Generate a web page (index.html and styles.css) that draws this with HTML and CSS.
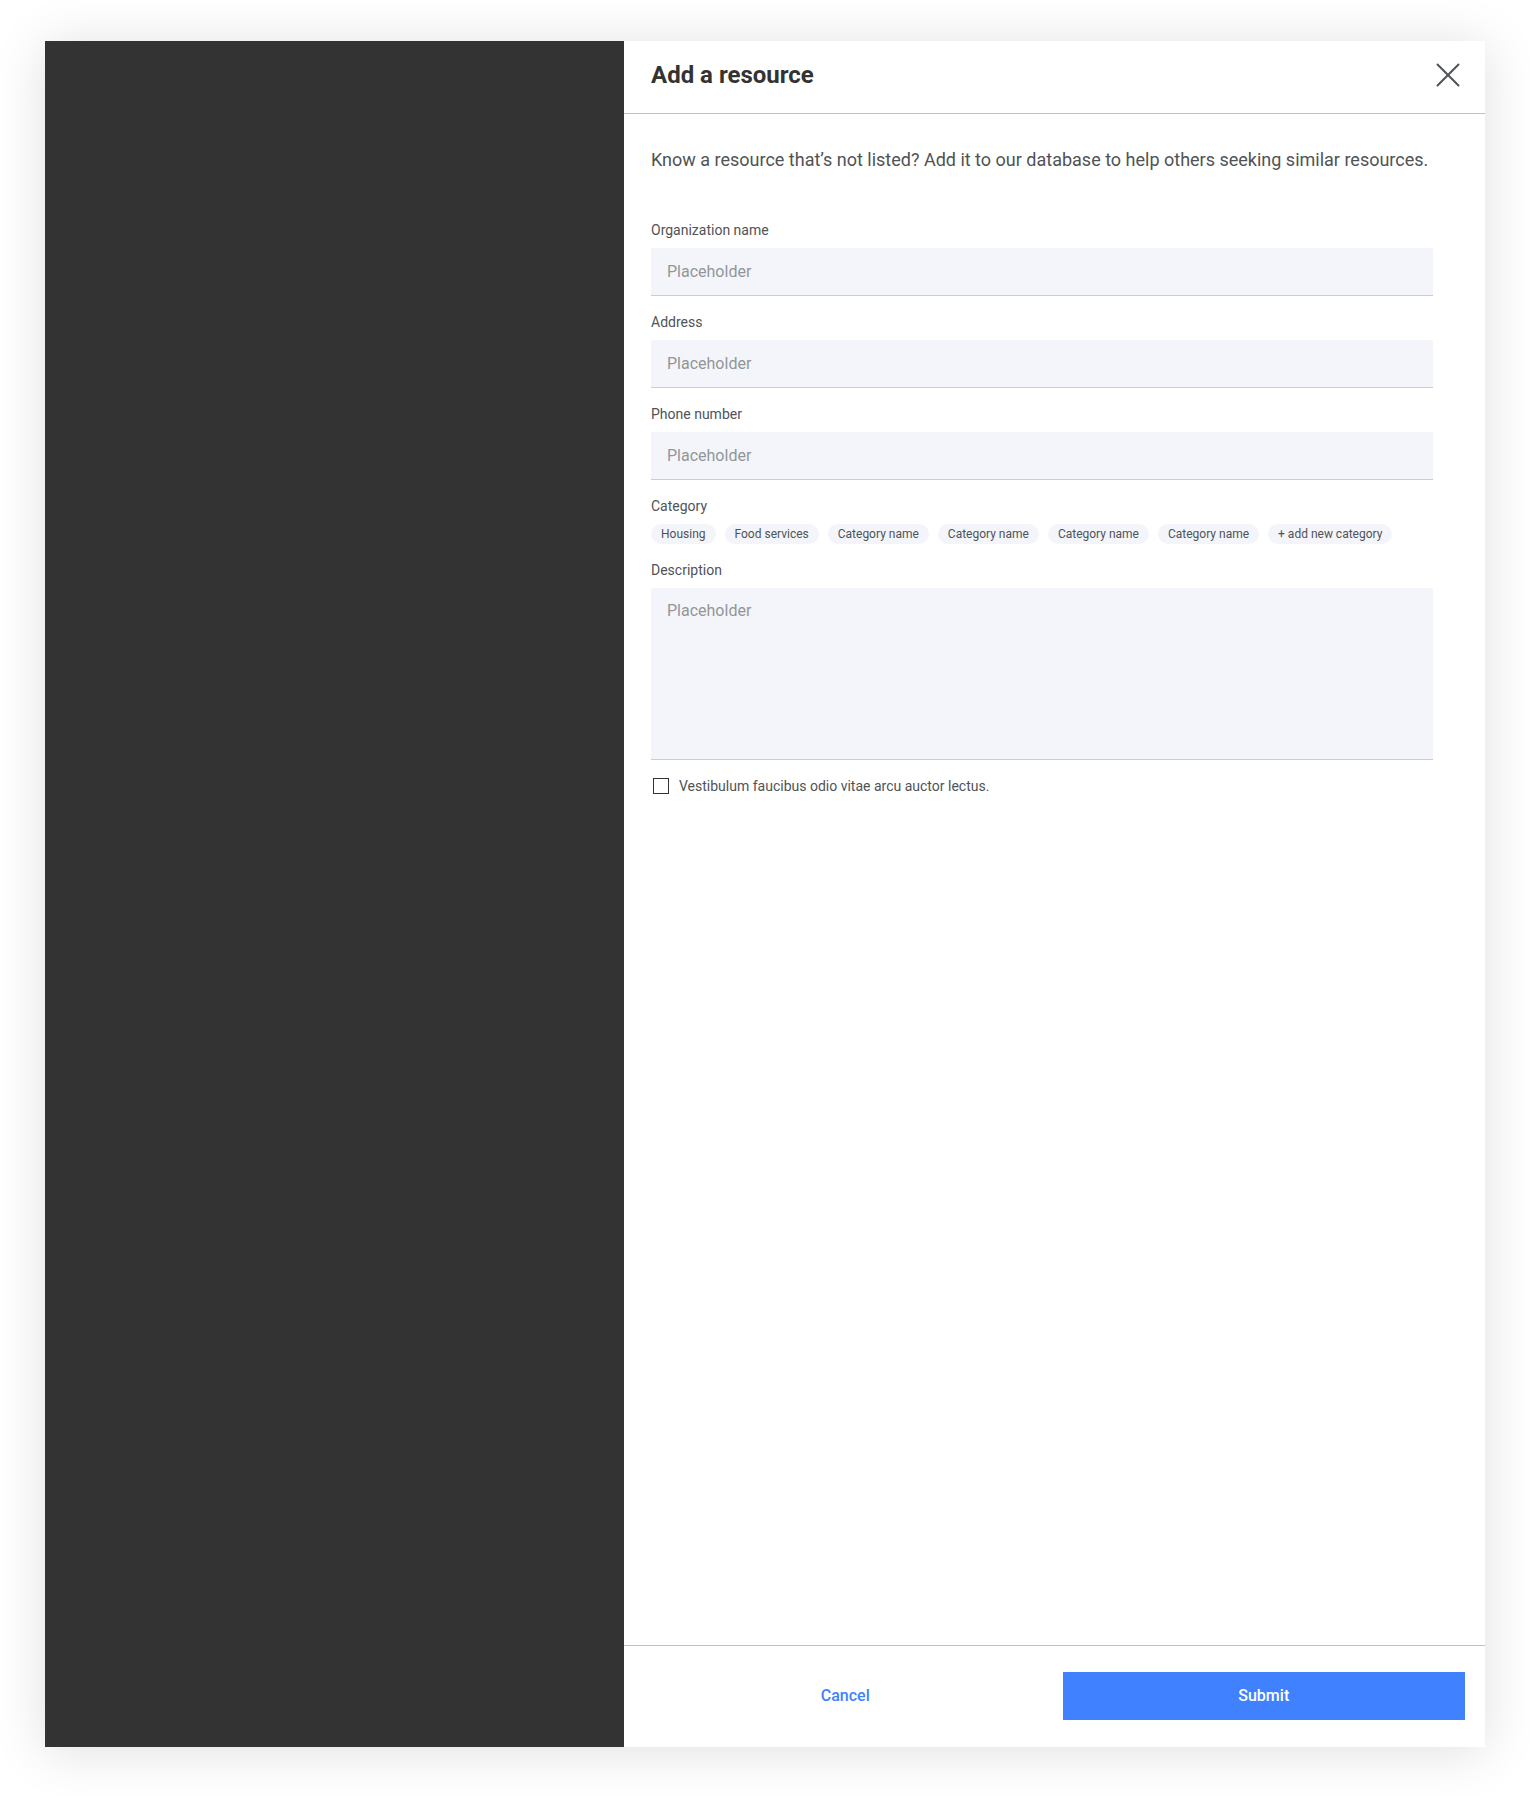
FILE: index.html
```
<!DOCTYPE html>
<html lang="en">
<head>
    <meta charset="UTF-8">
    <meta name="viewport" content="width=device-width, initial-scale=1.0">
    <title>Add a resource</title>
    <link rel="stylesheet" href="styles.css">
</head>
<body>
    <div class="window">
        <div class="backdrop"></div>
        <form class="panel">
            <header class="panel-header">
                <h1>Add a resource</h1>
                <button type="button" class="close" aria-label="Close">
                    <svg width="24" height="24" viewBox="0 0 24 24" fill="none" stroke="#4f5356" stroke-width="2" stroke-linecap="round">
                        <path d="M1.5 1.5L22.5 22.5M22.5 1.5L1.5 22.5"/>
                    </svg>
                </button>
            </header>

            <div class="panel-body">
                <p class="intro">Know a resource that’s not listed? Add it to our database to help others seeking similar resources.</p>

                <div class="field">
                    <label for="org">Organization name</label>
                    <input type="text" id="org" placeholder="Placeholder">
                </div>
                <div class="field">
                    <label for="address">Address</label>
                    <input type="text" id="address" placeholder="Placeholder">
                </div>
                <div class="field">
                    <label for="phone">Phone number</label>
                    <input type="tel" id="phone" placeholder="Placeholder">
                </div>
                <div class="field" role="group" aria-labelledby="category">
                    <span class="label" id="category">Category</span>
                    <div class="chips">
                        <button type="button">Housing</button>
                        <button type="button">Food services</button>
                        <button type="button">Category name</button>
                        <button type="button">Category name</button>
                        <button type="button">Category name</button>
                        <button type="button">Category name</button>
                        <button type="button">+ add new category</button>
                    </div>
                </div>
                <div class="field">
                    <label for="description">Description</label>
                    <textarea id="description" placeholder="Placeholder"></textarea>
                </div>
                <div class="check">
                    <input type="checkbox" id="agree">
                    <label for="agree">Vestibulum faucibus odio vitae arcu auctor lectus.</label>
                </div>
            </div>

            <footer class="panel-footer">
                <button type="button" class="btn">Cancel</button>
                <button type="submit" class="btn primary">Submit</button>
            </footer>
        </form>
    </div>
</body>
</html>
```
FILE: styles.css
```
* {
    box-sizing: border-box;
}
body {
    margin: 0;
    min-height: 100vh;
    padding: 41px 45px 49px;
    display: flex;
    font-family: Roboto, "Liberation Sans", sans-serif;
    color: #4f5356;
    background-color: white;
}
button, input, textarea {
    font-family: inherit;
    margin: 0;
}
button {
    border: none;
    background: none;
    cursor: pointer;
}
.window {
    flex: 1;
    display: flex;
    background-color: white;
    box-shadow: 0 4px 50px rgba(0, 0, 0, 0.13);
}
.backdrop {
    flex: 579;
    background-color: #333333;
}
.panel {
    flex: 861;
    display: flex;
    flex-direction: column;
}

/* header */
.panel-header {
    display: flex;
    justify-content: space-between;
    align-items: center;
    padding: 18px 25px 22px 27px;
    border-bottom: 1px solid #c1c1c1;
}
h1 {
    margin: 0;
    font-size: 24px;
    line-height: 32px;
    color: #333333;
}
.close {
    display: flex;
    padding: 0;
}

/* form */
.panel-body {
    flex: 1;
    display: flex;
    flex-direction: column;
    gap: 16px;
    padding: 34px 52px 34px 27px;
}
.intro {
    margin: 0 0 32px;
    font-size: 18px;
    line-height: 24px;
}
.field {
    display: flex;
    flex-direction: column;
    gap: 8px;
}
label, .label {
    font-size: 14px;
    line-height: 20px;
}
.field input, .field textarea {
    width: 100%;
    height: 48px;
    padding: 0 16px;
    font-size: 16px;
    line-height: 22px;
    border: none;
    border-bottom: 1px solid #cacdd2;
    border-radius: 0;
    background-color: #f4f5fa;
}
.field textarea {
    height: 172px;
    padding: 12px 16px;
    resize: none;
}
::placeholder {
    color: #929598;
}
.chips {
    display: flex;
    flex-wrap: wrap;
    gap: 9px;
}
.chips button {
    height: 20px;
    padding: 0 10px;
    font-size: 12px;
    line-height: 20px;
    color: #4f5356;
    border-radius: 10px;
    background-color: #f4f5fa;
}
.check {
    display: flex;
    align-items: center;
    gap: 10px;
    padding-left: 2px;
}
.check input {
    appearance: none;
    width: 16px;
    height: 16px;
    border: 1px solid #333333;
}
.check input:checked {
    background-color: #4081ff;
}

/* footer */
.panel-footer {
    display: flex;
    gap: 16px;
    padding: 26px 20px 27px;
    border-top: 1px solid #c1c1c1;
}
.btn {
    flex: 1;
    height: 48px;
    padding: 0 0 2px;
    font-size: 16px;
    font-weight: 500;
    color: #4081ff;
}
.btn.primary {
    color: white;
    background-color: #4081ff;
}
```
